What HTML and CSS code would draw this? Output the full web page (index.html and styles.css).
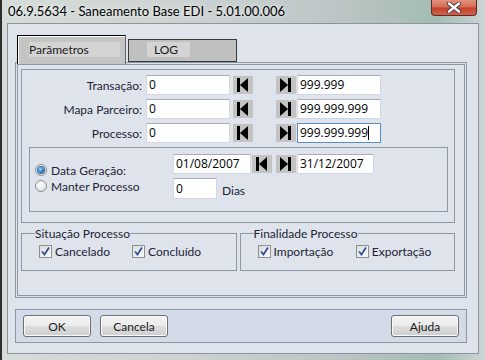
FILE: index.html
```html
<!DOCTYPE html>
<html lang="pt">
<head>
  <meta charset="UTF-8">
  <title>Saneamento Base EDI</title>
  <link rel="stylesheet" href="styles.css">
</head>
<body>

  <div class="window">
    <div class="titlebar">
      <span class="title">06.9.5634 - Saneamento Base EDI - 5.01.00.006</span>
      <span class="close">
        <svg width="16" height="11" viewBox="0 0 16 11">
          <path d="M3 1.5 L13 9.5 M13 1.5 L3 9.5" stroke="#3a3f4a" stroke-width="4.2" stroke-linecap="round"/>
          <path d="M3 1.5 L13 9.5 M13 1.5 L3 9.5" stroke="#fff" stroke-width="2.4" stroke-linecap="round"/>
        </svg>
      </span>
    </div>

    <div class="client">
      <div class="tabs">
        <div class="tab active"><span>Parâmetros</span></div>
        <div class="tab"><span>LOG</span></div>
      </div>

      <div class="panel">
        <div class="range-box">
          <div class="row">
            <label class="lbl">Transação:</label>
            <span class="field">0</span>
            <span class="nav first"><svg width="20" height="18" viewBox="0 0 20 18"><rect x="4" y="2" width="3" height="14"/><polygon points="7,9 15,2 15,16"/></svg></span>
            <span class="nav last"><svg width="20" height="18" viewBox="0 0 20 18"><polygon points="4,2 4,16 12,9"/><rect x="12" y="2" width="3" height="14"/></svg></span>
            <span class="field">999.999</span>
          </div>
          <div class="row">
            <label class="lbl">Mapa Parceiro:</label>
            <span class="field">0</span>
            <span class="nav first"><svg width="20" height="18" viewBox="0 0 20 18"><rect x="4" y="2" width="3" height="14"/><polygon points="7,9 15,2 15,16"/></svg></span>
            <span class="nav last"><svg width="20" height="18" viewBox="0 0 20 18"><polygon points="4,2 4,16 12,9"/><rect x="12" y="2" width="3" height="14"/></svg></span>
            <span class="field">999.999.999</span>
          </div>
          <div class="row">
            <label class="lbl">Processo:</label>
            <span class="field">0</span>
            <span class="nav first"><svg width="20" height="18" viewBox="0 0 20 18"><rect x="4" y="2" width="3" height="14"/><polygon points="7,9 15,2 15,16"/></svg></span>
            <span class="nav last"><svg width="20" height="18" viewBox="0 0 20 18"><polygon points="4,2 4,16 12,9"/><rect x="12" y="2" width="3" height="14"/></svg></span>
            <span class="field focus">999.999.999<i class="caret"></i></span>
          </div>

          <div class="date-box">
            <div class="radios">
              <div class="radio on"><span class="dot"></span>Data Geração:</div>
              <div class="radio"><span class="dot"></span>Manter Processo</div>
            </div>
            <div class="date-fields">
              <div class="row">
                <span class="field date">01/08/2007</span>
                <span class="nav first"><svg width="20" height="18" viewBox="0 0 20 18"><rect x="4" y="2" width="3" height="14"/><polygon points="7,9 15,2 15,16"/></svg></span>
                <span class="nav last"><svg width="20" height="18" viewBox="0 0 20 18"><polygon points="4,2 4,16 12,9"/><rect x="12" y="2" width="3" height="14"/></svg></span>
                <span class="field date end">31/12/2007</span>
              </div>
              <div class="row days-row">
                <span class="field days">0</span>
                <span class="unit">Dias</span>
              </div>
            </div>
          </div>
        </div>

        <div class="groups">
          <fieldset class="group sit">
            <legend>Situação Processo</legend>
            <div class="checks">
              <div class="check"><span class="box"><svg width="11" height="11" viewBox="0 0 11 11"><path d="M2 5.5 L4.5 8.5 L9 1.5" fill="none" stroke="#2d4f98" stroke-width="1.8"/></svg></span>Cancelado</div>
              <div class="check"><span class="box"><svg width="11" height="11" viewBox="0 0 11 11"><path d="M2 5.5 L4.5 8.5 L9 1.5" fill="none" stroke="#2d4f98" stroke-width="1.8"/></svg></span>Concluído</div>
            </div>
          </fieldset>
          <fieldset class="group fin">
            <legend>Finalidade Processo</legend>
            <div class="checks">
              <div class="check"><span class="box"><svg width="11" height="11" viewBox="0 0 11 11"><path d="M2 5.5 L4.5 8.5 L9 1.5" fill="none" stroke="#2d4f98" stroke-width="1.8"/></svg></span>Importação</div>
              <div class="check"><span class="box"><svg width="11" height="11" viewBox="0 0 11 11"><path d="M2 5.5 L4.5 8.5 L9 1.5" fill="none" stroke="#2d4f98" stroke-width="1.8"/></svg></span>Exportação</div>
            </div>
          </fieldset>
        </div>
      </div>

      <div class="buttonbar">
        <button class="btn">OK</button>
        <button class="btn">Cancela</button>
        <button class="btn help">Ajuda</button>
      </div>
    </div>
  </div>

</body>
</html>
```

FILE: styles.css
```css
body {
  margin: 0;
  width: 485px;
  height: 360px;
  overflow: hidden;
  font-family: Lato, 'Noto Sans', sans-serif;
  font-size: 12px;
  color: #1e2438;
}

.window {
  height: 360px;
  box-sizing: border-box;
  display: flex;
  flex-direction: column;
  border-left: 2px solid #2e2e2e;
  background: linear-gradient(90deg, #d6dcd9 0%, #cbd2d1 40%, #bcc5c5 70%, #a3bcb3 90%, #cdd4d5 100%);
}

.titlebar {
  height: 23px;
  display: flex;
  justify-content: space-between;
  align-items: flex-start;
  padding-left: 6px;
}

.title {
  margin-top: 3px;
  line-height: 16px;
  font-size: 13px;
  color: #000;
  text-shadow: 0 0 5px #e8ecea, 0 0 3px #eef1ef;
}

.close {
  width: 46px;
  height: 16px;
  margin-right: 8px;
  box-sizing: border-box;
  border: 1px solid #5e2a24;
  border-top: none;
  border-radius: 0 0 4px 4px;
  background: linear-gradient(#e2937f 0%, #d66b55 45%, #c2432c 55%, #d2624a 100%);
  display: flex;
  justify-content: center;
  align-items: center;
}

.client {
  flex: 1;
  margin: 0 6px 6px 5px;
  border: 1px solid #8d949c;
  background: #dfe3eb;
  padding: 11px 0 0 7px;
}

/* tabs */

.tabs {
  display: flex;
  align-items: flex-start;
  height: 27px;
  margin-left: 2px;
  position: relative;
  z-index: 1;
}

.tab {
  box-sizing: border-box;
  width: 109px;
  height: 23px;
  margin: 4px 0 0 2px;
  border: 1px solid #3a3a3a;
  background: #c0c0c0;
  padding: 2px 0 0 18px;
}

.tab span {
  display: block;
  width: 43px;
  height: 15px;
  line-height: 15px;
  padding-left: 7px;
  box-sizing: border-box;
  background: #d4d4d4;
  color: #1a1a1a;
}

.tab.active {
  height: 29px;
  margin: 0;
  border-bottom: none;
  border-color: #000 #666 #000 #000;
  background: #c4c4c4;
  box-shadow: inset 1px 1px 0 #fff;
  padding: 6px 0 0 11px;
}

.tab.active span {
  width: 91px;
  padding-left: 0;
}

/* main panel */

.panel {
  box-sizing: border-box;
  width: 452px;
  height: 236px;
  border: 3px double #8d98a7;
}

.range-box {
  margin: 4px 9px 0 3px;
  border: 1px solid #8d98a7;
  padding: 5px 0 10px 0;
}

.row {
  display: flex;
  align-items: center;
  height: 20px;
  margin-bottom: 4px;
}

.lbl {
  width: 120px;
  margin-right: 4px;
  text-align: right;
}

.field {
  box-sizing: border-box;
  width: 84px;
  height: 20px;
  border: 1px solid #d3d8e0;
  border-top-color: #abadb3;
  background: #fff;
  padding-left: 2px;
  font-family: 'Open Sans', sans-serif;
  font-size: 12px;
  line-height: 18px;
  color: #000;
  display: flex;
  align-items: center;
}

.field.focus {
  border-color: #5b8fc4;
}

.caret {
  display: inline-block;
  width: 1px;
  height: 14px;
  background: #000;
}

.nav {
  width: 20px;
  height: 18px;
  margin-left: 3px;
  background: #c3c3c3;
  display: block;
}

.nav.last {
  margin-left: 23px;
}

.nav + .field {
  margin-left: 1px;
}

/* date sub box */

.date-box {
  display: grid;
  grid-template-columns: 143px auto;
  margin: 2px 6px 0 7px;
  border: 1px solid #8d98a7;
  padding: 6px 0 12px 0;
}

.radios {
  padding: 8px 0 0 5px;
}

.radio {
  height: 16px;
  display: flex;
  align-items: center;
}

.dot {
  box-sizing: border-box;
  width: 12px;
  height: 12px;
  margin-right: 4px;
  border: 1px solid #8e8f8f;
  border-radius: 50%;
  background: radial-gradient(circle at 40% 35%, #fff 0%, #e6e6e6 60%, #cfcfcf 100%);
  display: flex;
  justify-content: center;
  align-items: center;
}

.radio.on .dot::after {
  content: '';
  width: 6px;
  height: 6px;
  border-radius: 50%;
  background: radial-gradient(circle at 40% 35%, #9fd6f6 0%, #2f7fc8 55%, #17489a 100%);
  box-shadow: 0 0 0 1px #35669c;
}

.field.date {
  width: 78px;
}

.field.date.end {
  width: 77px;
}

.date-fields .nav {
  margin-left: 1px;
}

.date-fields .nav.last {
  margin-left: 4px;
}

.days-row {
  height: 21px;
  margin-bottom: 0;
}

.field.days {
  width: 44px;
  height: 21px;
}

.unit {
  margin-left: 5px;
  padding-top: 3px;
}

/* check groups */

.groups {
  display: flex;
  gap: 3px;
  margin: 3px 9px 0 3px;
}

.group {
  flex: 1;
  margin: 0;
  border: 1px solid #8d98a7;
  padding: 0 0 10px 13px;
  min-width: 0;
}

.group legend {
  padding: 0;
  line-height: 15px;
}

.checks {
  display: flex;
  padding-left: 4px;
  margin-top: 2px;
}

.check {
  width: 93px;
  height: 17px;
  display: flex;
  align-items: center;
}

.fin .check {
  width: 100px;
}

.box {
  box-sizing: border-box;
  width: 13px;
  height: 13px;
  margin-right: 3px;
  border: 1px solid #8e8f8f;
  background: linear-gradient(135deg, #dcdcdc, #fbfbfb);
  display: flex;
  justify-content: center;
  align-items: center;
}

/* buttons */

.buttonbar {
  box-sizing: border-box;
  width: 452px;
  margin-top: 11px;
  border: 1px solid #8d98a7;
  background: #d3dbe9;
  padding: 5px 7px;
  display: flex;
}

.btn {
  width: 68px;
  height: 22px;
  border: 1px solid #707070;
  border-radius: 3px;
  background: linear-gradient(#f2f2f2 0%, #ebebeb 50%, #dddddd 51%, #cfcfcf 100%);
  box-shadow: inset 0 0 0 1px #fbfbfb;
  font-family: Lato, 'Noto Sans', sans-serif;
  font-size: 12px;
  font-weight: 400;
  color: #1a1a1a;
  padding: 0;
}

.btn + .btn {
  margin-left: 9px;
}

.btn.help {
  margin-left: auto;
}
```
